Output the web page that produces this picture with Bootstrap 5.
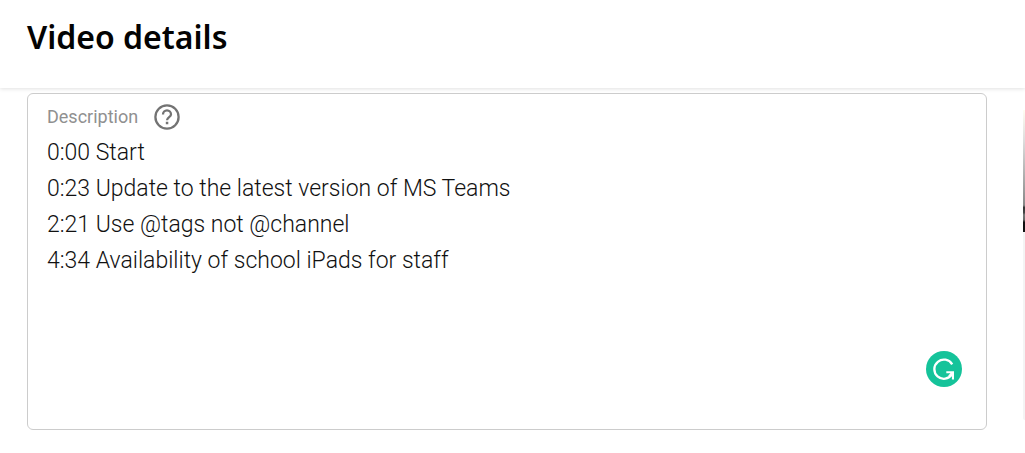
<!DOCTYPE html>
<html lang="en">
<head>
<meta charset="utf-8">
<meta name="viewport" content="width=device-width, initial-scale=1">
<title>Video details</title>
<link href="https://cdn.jsdelivr.net/npm/bootstrap@5.3.0/dist/css/bootstrap.min.css" rel="stylesheet">
<style>
body { font-family: Roboto, sans-serif; color: #282828; background: #fff; }
.page-head { height: 88px; padding: 0 27px 14px; box-shadow: 0 1px 4px rgba(0,0,0,.12); z-index: 1; }
.page-head h1 { font: 600 32px/40px "Noto Sans", sans-serif; color: #030303; }
.editor { padding: 5px 0 23px 27px; gap: 36px; }
.field-box { border: 1px solid #ccc; border-radius: 6px; padding: 9px 19px; }
.field-box:focus-within { border-color: #065fd4; }
.field-label { font-size: 18px; line-height: 28px; color: #909090; }
.help-btn { color: #737373; line-height: 0; }
.field-text { font-size: 23px; font-weight: 300; line-height: 36px; color: #111; resize: none; height: 285px; margin-top: 4px; outline: 0; }
.checker { right: 24px; bottom: 42px; line-height: 0; }
.preview { width: 2px; overflow: hidden; padding-top: 17px; }
.thumb { height: 122px; background: linear-gradient(#fffdf2 0, #ddd 25%, #888 78%, #333 80%, #444 84%, #777 86%, #666 90%, #111 92%); }
.meta { height: 188px; background: #f4f4f4; border-bottom-left-radius: 4px; }
</style>
</head>
<body>
<header class="page-head d-flex align-items-center position-relative bg-white">
  <h1 class="m-0">Video details</h1>
</header>
<main class="editor d-flex">
  <section class="field-box position-relative flex-grow-1">
    <div class="d-flex align-items-center gap-3">
      <label class="field-label" for="description">Description</label>
      <button type="button" class="help-btn btn p-0 border-0" aria-label="Help">
        <svg width="26" height="26" viewBox="0 0 26 26" fill="none" stroke="currentColor" stroke-width="2.3">
          <circle cx="13" cy="13" r="11.6"/>
          <path d="M9 10.4a4 4 0 1 1 8 0c0 2.6-4 2.8-4 5.9"/>
          <path d="M11.8 19h2.5" stroke-width="2.5"/>
        </svg>
      </button>
    </div>
    <textarea id="description" class="field-text d-block w-100 p-0 border-0 bg-transparent" spellcheck="false">0:00 Start
0:23 Update to the latest version of MS Teams
2:21 Use @tags not @channel
4:34 Availability of school iPads for staff</textarea>
    <button type="button" class="checker btn p-0 border-0 position-absolute" aria-label="Check writing">
      <svg width="36" height="36" viewBox="0 0 36 36" fill="none">
        <circle cx="18" cy="18" r="18" fill="#15c39a"/>
        <path d="M26.2 13.3A9.6 9.6 0 1 0 26 23.4" stroke="#fff" stroke-width="2.3"/>
        <path d="M20.3 20.2H28V28.6H25.9V23.7L23.5 25.8L22.2 24.4L24.5 22.2H20.3Z" fill="#fff"/>
      </svg>
    </button>
  </section>
  <aside class="preview flex-shrink-0" aria-label="Video preview">
    <div class="thumb"></div>
    <div class="meta"></div>
  </aside>
</main>
<script src="https://cdn.jsdelivr.net/npm/bootstrap@5.3.0/dist/js/bootstrap.bundle.min.js"></script>
</body>
</html>
